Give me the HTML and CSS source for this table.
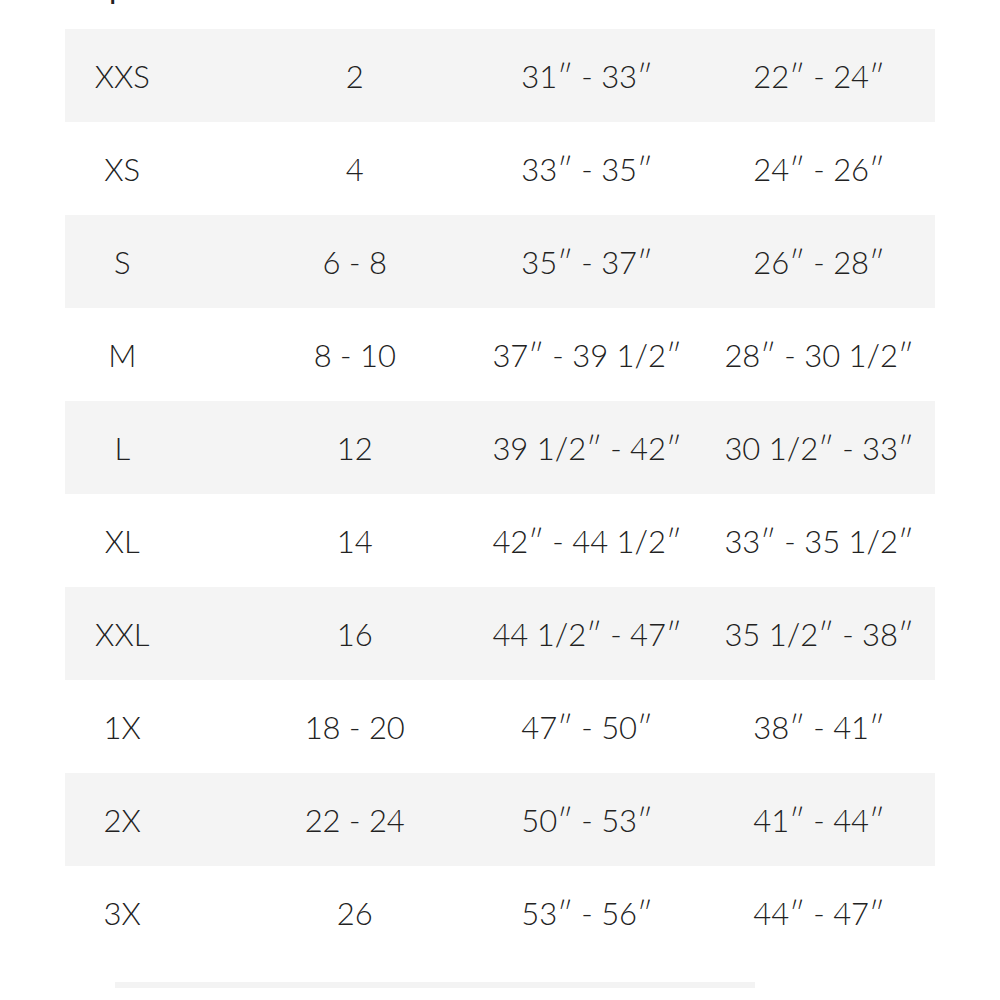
FILE: index.html
```html
<!DOCTYPE html>
<html>
<head>
<meta charset="utf-8">
<link rel="stylesheet" href="styles.css">
</head>
<body>
<div class="top"><span class="title">p</span></div>
<div class="chart">
  <div class="row shade"><div class="c first">XXS</div><div class="c">2</div><div class="c">31″ - 33″</div><div class="c">22″ - 24″</div></div>
  <div class="row"><div class="c first">XS</div><div class="c">4</div><div class="c">33″ - 35″</div><div class="c">24″ - 26″</div></div>
  <div class="row shade"><div class="c first">S</div><div class="c">6 - 8</div><div class="c">35″ - 37″</div><div class="c">26″ - 28″</div></div>
  <div class="row"><div class="c first">M</div><div class="c">8 - 10</div><div class="c">37″ - 39 1/2″</div><div class="c">28″ - 30 1/2″</div></div>
  <div class="row shade"><div class="c first">L</div><div class="c">12</div><div class="c">39 1/2″ - 42″</div><div class="c">30 1/2″ - 33″</div></div>
  <div class="row"><div class="c first">XL</div><div class="c">14</div><div class="c">42″ - 44 1/2″</div><div class="c">33″ - 35 1/2″</div></div>
  <div class="row shade"><div class="c first">XXL</div><div class="c">16</div><div class="c">44 1/2″ - 47″</div><div class="c">35 1/2″ - 38″</div></div>
  <div class="row"><div class="c first">1X</div><div class="c">18 - 20</div><div class="c">47″ - 50″</div><div class="c">38″ - 41″</div></div>
  <div class="row shade"><div class="c first">2X</div><div class="c">22 - 24</div><div class="c">50″ - 53″</div><div class="c">41″ - 44″</div></div>
  <div class="row"><div class="c first">3X</div><div class="c">26</div><div class="c">53″ - 56″</div><div class="c">44″ - 47″</div></div>
</div>
<div class="scrollbar"></div>
</body>
</html>
```
FILE: styles.css
```css
html, body {
  margin: 0;
  padding: 0;
  background: #ffffff;
}
body {
  font-family: Lato, "Noto Sans", sans-serif;
  color: #222222;
}
.top {
  height: 29px;
  overflow: hidden;
}
.title {
  display: block;
  margin-top: -34px;
  margin-left: 109px;
  font-size: 32px;
  line-height: 40px;
  color: #222;
}
.chart {
  margin-left: 65px;
  width: 870px;
}
.row {
  display: grid;
  grid-template-columns: 173.5px 232.5px 232px 232px;
  height: 93px;
  align-items: center;
}
.row.shade {
  background: #f4f4f4;
}
.c {
  text-align: center;
  font-size: 31px;
  font-weight: 300;
  line-height: 40px;
  white-space: nowrap;
}
.c.first {
  padding-right: 59px;
}
.scrollbar {
  margin-top: 23px;
  margin-left: 115px;
  width: 640px;
  height: 6px;
  background: #f3f3f3;
}
```
